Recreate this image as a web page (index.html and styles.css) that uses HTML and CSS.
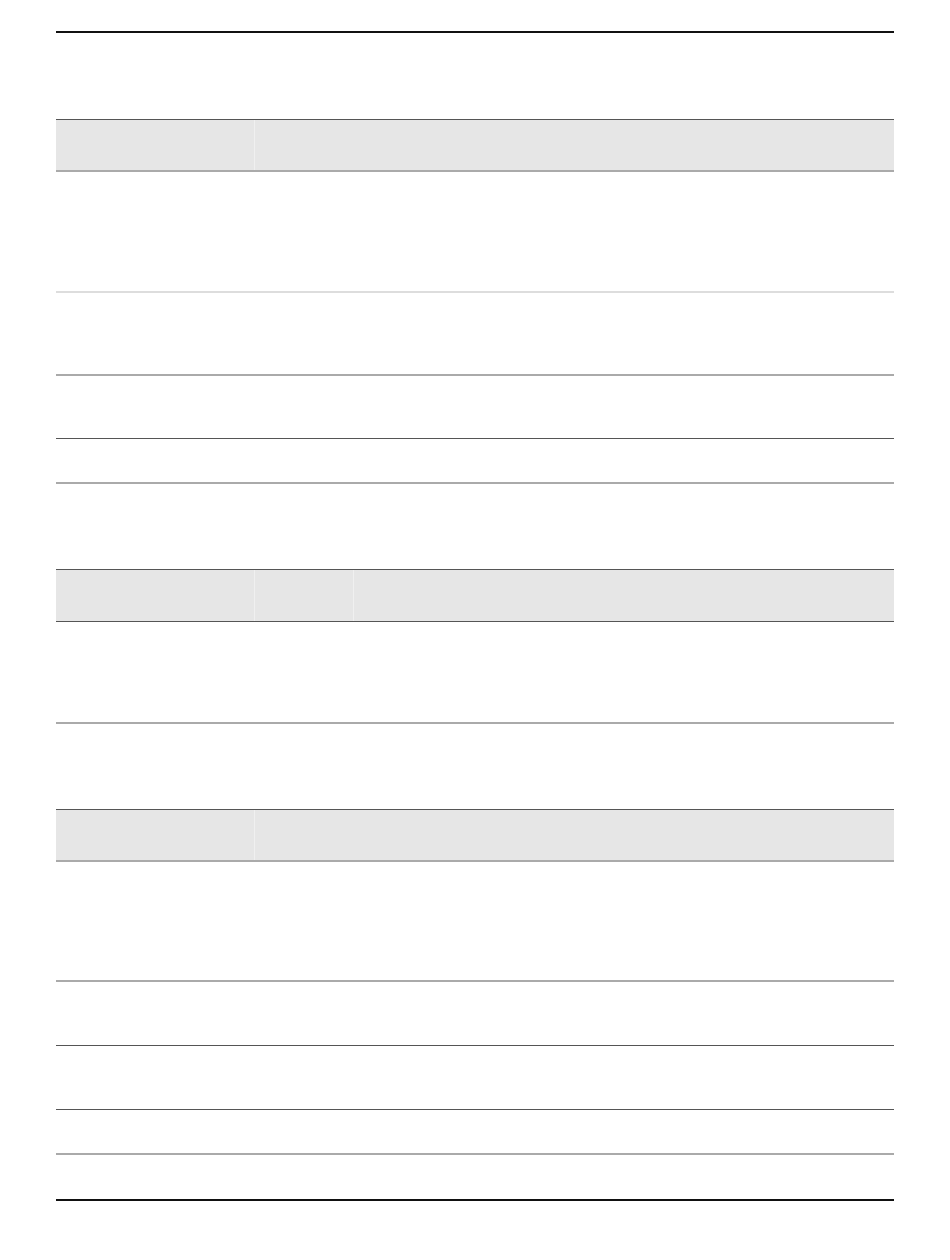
FILE: index.html
```html
<!DOCTYPE html>
<html lang="en">
<head>
    <meta charset="UTF-8">
    <meta name="viewport" content="width=device-width, initial-scale=1.0">
    <title>Tables</title>
    <link rel="stylesheet" href="styles.css">
</head>
<body>
    <div class="page">
        <div class="rule"></div>

        <div class="tbl first">
            <div class="head cols-2 soft">
                <div class="cell"></div>
                <div class="cell"></div>
            </div>
            <div class="row h121 line-light"></div>
            <div class="row h83 line-mid"></div>
            <div class="row h63 line-dark"></div>
            <div class="row h45 line-mid"></div>
        </div>

        <div class="tbl">
            <div class="head cols-3">
                <div class="cell"></div>
                <div class="cell"></div>
                <div class="cell"></div>
            </div>
            <div class="row h102 line-mid"></div>
        </div>

        <div class="tbl">
            <div class="head cols-2 soft">
                <div class="cell"></div>
                <div class="cell"></div>
            </div>
            <div class="row h120 line-mid"></div>
            <div class="row h64 line-dark"></div>
            <div class="row h64 line-dark"></div>
            <div class="row h45 line-mid"></div>
        </div>

        <div class="rule bottom"></div>
    </div>
</body>
</html>
```

FILE: styles.css
```css
body {
    margin: 0;
    font-family: "Liberation Sans", Arial, sans-serif;
    background: #fff;
}
.page {
    padding: 31px 56px 0;
}
.rule {
    height: 0;
    border-top: 2px solid #111;
}
.rule.bottom {
    margin-top: 44px;
}
.tbl {
    margin-top: 85px;
}
.tbl.first {
    margin-top: 86px;
}
.head {
    display: grid;
    height: 53px;
    box-sizing: border-box;
    background: #e6e6e6;
    border-top: 1px solid #555;
    border-bottom: 1px solid #555;
}
.head.soft {
    border-bottom: 2px solid #aaa;
}
.cols-2 {
    grid-template-columns: 198px 1fr;
}
.cols-3 {
    grid-template-columns: 198px 99px 1fr;
}
.cell + .cell {
    border-left: 1px solid #f0f0f0;
}
.row {
    box-sizing: border-box;
}
.line-light { border-bottom: 2px solid #ddd; }
.line-mid { border-bottom: 2px solid #aaa; }
.line-dark { border-bottom: 1px solid #555; }
.h45 { height: 45px; }
.h63 { height: 63px; }
.h64 { height: 64px; }
.h83 { height: 83px; }
.h102 { height: 102px; }
.h120 { height: 120px; }
.h121 { height: 121px; }
```
